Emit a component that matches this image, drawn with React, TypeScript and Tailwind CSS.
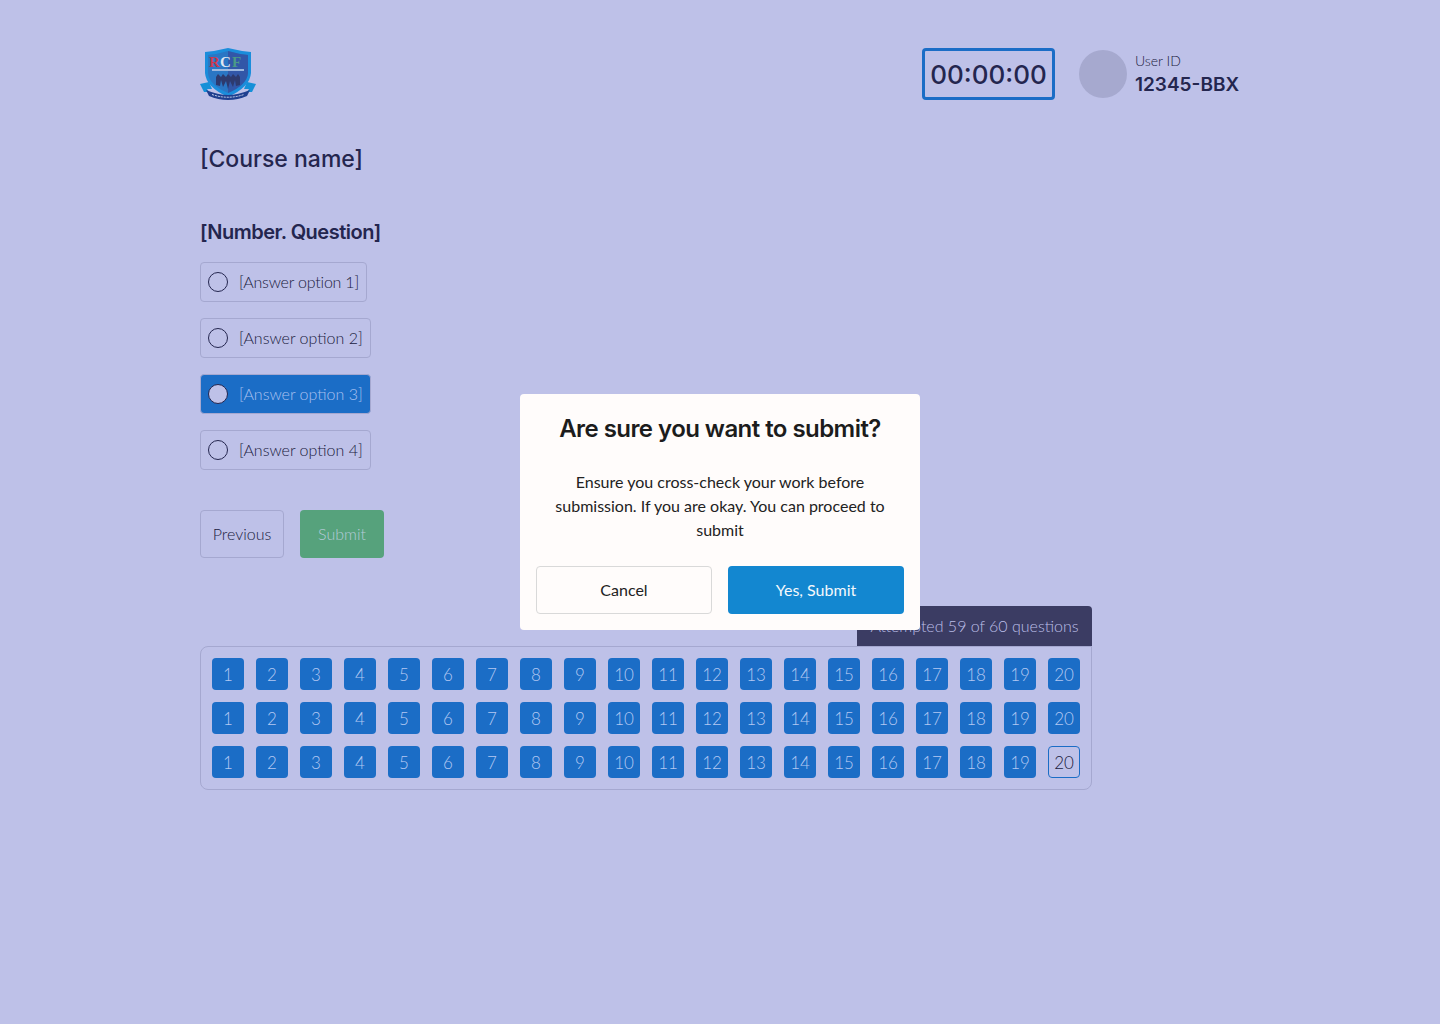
const rows = [0, 1, 2]
const numbers = Array.from({ length: 20 }, (_, i) => i + 1)
const options = ['[Answer option 1]', '[Answer option 2]', '[Answer option 3]', '[Answer option 4]']

function Logo() {
  return (
    <svg width="56" height="54" viewBox="0 0 56 54" className="shrink-0">
      <path d="M0 37 L9 35 L12 42 L7 42 L9 45 L4 45 Z" fill="#1590d8" />
      <path d="M56 37 L47 35 L44 42 L49 42 L47 45 L52 45 Z" fill="#1590d8" />
      <path d="M5 5 Q16 4 28 1 Q40 4 51 5 L51 26 Q50 40 28 50 Q6 40 5 26 Z" fill="#1b8ddb" />
      <path d="M8 8 Q18 7 28 4 Q38 7 48 8 L48 26 Q47 38 28 46 Q9 38 8 26 Z" fill="#2a76c4" />
      <path d="M28 4 Q38 7 48 8 L48 26 Q47 38 28 46 Z" fill="#3257a8" />
      <text x="9" y="20" fontFamily="'Liberation Serif', serif" fontSize="15" fontWeight="700" fill="#c8394e">R</text>
      <text x="20" y="20" fontFamily="'Liberation Serif', serif" fontSize="15" fontWeight="700" fill="#dfe6f2">C</text>
      <text x="32" y="20" fontFamily="'Liberation Serif', serif" fontSize="15" fontWeight="700" fill="#4b9a86">F</text>
      <rect x="12" y="22" width="32" height="2" fill="#9db8de" />
      <path d="M16 38 L16 30 L18 27 L21 30 L23 27 L26 30 L28 27 L31 30 L33 27 L36 30 L38 27 L40 30 L40 38 L36 39 L35 33 L33 40 L30 34 L28 42 L26 34 L23 40 L21 33 L20 39 Z" fill="#2d3a6e" />
      <path d="M6 43 Q18 48 28 48 Q38 48 50 43 L47 49 Q38 53 28 53 Q18 53 9 49 Z" fill="#1f3f8f" />
      <path d="M12 47.5 Q28 53 44 47.5" stroke="#cfd8ee" strokeWidth="1" fill="none" strokeDasharray="2 1" />
    </svg>
  )
}

export default function App() {
  return (
    <div className="relative min-h-screen bg-[#bec1e8] font-['Lato',sans-serif] font-light text-[#1a1b40]">
      <div className="mx-auto w-[1040px] pt-12">
        {/* Header */}
        <header className="flex h-[52px] items-center justify-between">
          <Logo />
          <div className="flex items-center gap-6">
            <div className="flex h-[52px] w-[133px] items-center justify-center rounded border-[3px] border-[#1b6dc6] font-['Inter',sans-serif] text-[26px] font-medium text-[#24264f]">
              00:00:00
            </div>
            <div className="flex items-center gap-2">
              <div className="h-12 w-12 rounded-full bg-[#a6a9cf]" />
              <div className="w-[105px]">
                <p className="whitespace-nowrap text-sm leading-[21px]">User ID</p>
                <p className="whitespace-nowrap font-['Inter',sans-serif] text-[19px] font-semibold leading-[27px] text-[#24264f]">12345-BBX</p>
              </div>
            </div>
          </div>
        </header>

        <h1 className="mt-[43px] font-['Inter',sans-serif] text-[23px] font-medium leading-8 text-[#24264f]">[Course name]</h1>
        <h2 className="mt-[43px] font-['Inter',sans-serif] text-xl font-semibold leading-7 tracking-[-0.5px] text-[#24264f]">[Number. Question]</h2>

        {/* Answers */}
        <div className="mt-4 flex flex-col items-start gap-4">
          {options.map((option, index) => (
            <label
              key={option}
              className={`flex h-10 items-center gap-[11px] rounded border pl-[7px] pr-[7px] ${
                index === 2 ? 'border-[#a5a8d0] bg-[#1b6dc6] text-[#a9c0f0]' : 'border-[#a5a8d0]'
              }`}
            >
              <span
                className={`h-5 w-5 rounded-full border border-[#24264f] ${index === 2 ? 'bg-[#bec1e8]' : ''}`}
              />
              <span className={`text-base ${index === 0 ? 'tracking-[-0.2px]' : ''}`}>{option}</span>
            </label>
          ))}
        </div>

        {/* Actions */}
        <div className="mt-10 flex gap-4">
          <button className="h-12 w-[84px] rounded border border-[#a5a8d0] text-base">Previous</button>
          <button className="h-12 w-[84px] rounded bg-[#56a27c] text-base text-[#b4cbd8]">Submit</button>
        </div>

        {/* Question navigator */}
        <div className="mt-12 flex w-[892px] flex-col items-end">
          <div className="flex h-10 w-[235px] items-center justify-center rounded-t bg-[#3b3c63] text-base text-[#bcbfe8]">
            Attempted 59 of 60 questions
          </div>
          <div className="flex w-full flex-col gap-3 rounded-b-lg rounded-tl-lg border border-[#a5a8d0] p-[11px]">
            {rows.map((row) => (
              <div key={row} className="flex gap-3">
                {numbers.map((n) => {
                  const current = row === 2 && n === 20
                  return (
                    <button
                      key={n}
                      className={`flex h-8 w-8 items-center justify-center rounded pt-px text-[17px] ${
                        current ? 'border border-[#1b6dc6] text-[#1a1b40]' : 'bg-[#1b6dc6] text-[#b3c8f2]'
                      }`}
                    >
                      {n}
                    </button>
                  )
                })}
              </div>
            ))}
          </div>
        </div>
      </div>

      {/* Confirm dialog */}
      <div className="absolute inset-0 flex items-center justify-center">
        <div className="w-[400px] rounded bg-[#fffcfb] p-4 text-center font-normal text-[#222]">
          <h3 className="font-['Inter',sans-serif] text-2xl font-semibold leading-[38px] tracking-[-0.55px] text-[#1c1c1c]">Are sure you want to submit?</h3>
          <p className="mt-[22px] px-4 text-base leading-6">
            Ensure you cross-check your work before submission. If you are okay. You can proceed to submit
          </p>
          <div className="mt-6 flex justify-between">
            <button className="h-12 w-44 rounded border border-[#d9d9d9] text-base">Cancel</button>
            <button className="h-12 w-44 rounded bg-[#1387d0] text-base text-[#f4f8fc]">Yes, Submit</button>
          </div>
        </div>
      </div>
    </div>
  )
}
